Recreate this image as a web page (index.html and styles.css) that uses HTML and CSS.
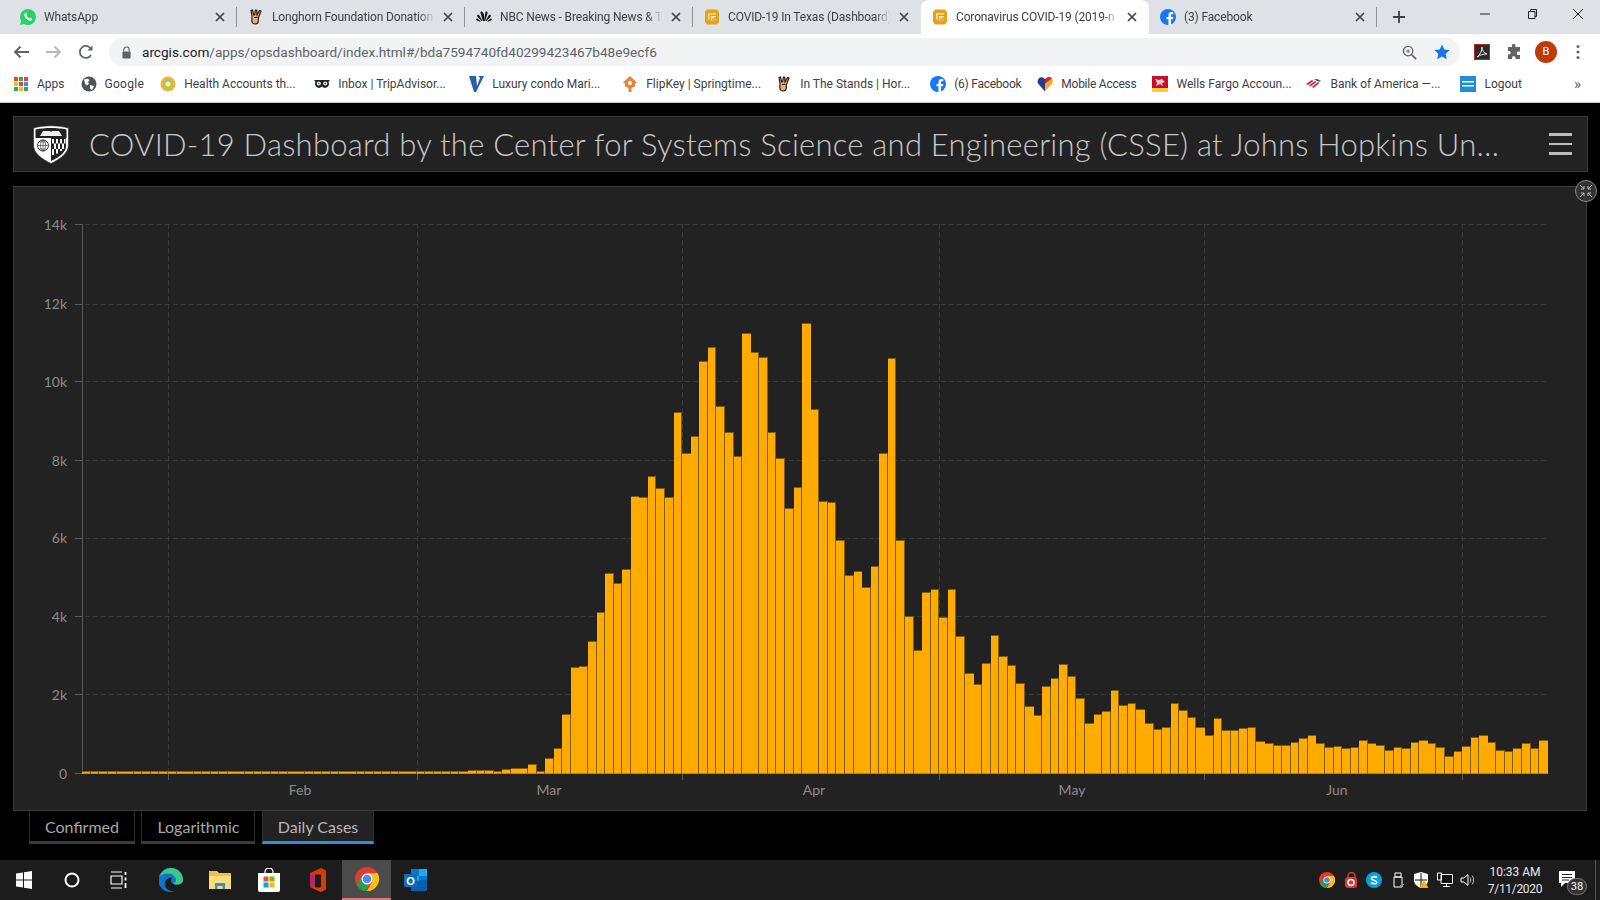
FILE: index.html
```html
<!DOCTYPE html>
<html lang="en">
<head>
<meta charset="utf-8">
<title>Coronavirus COVID-19</title>
<link rel="stylesheet" href="styles.css">
</head>
<body>
<svg class="defs" width="0" height="0" aria-hidden="true">
  <symbol id="i-x" viewBox="0 0 10 10"><path d="M1 1l8 8M9 1L1 9" stroke="#3f4347" stroke-width="1.700"/></symbol>
  <symbol id="i-wa" viewBox="0 0 16 16"><path d="M8 0a8 8 0 0 0-6.800 12.200L0 16l3.900-1.100A8 8 0 1 0 8 0z" fill="#25d366"/><path d="M5.600 3.900c.7-.3 1 .2 1.400 1.300.2.500 0 .8-.5 1.400.6 1.300 1.600 2.200 2.900 2.900.5-.6.800-.8 1.300-.5 1.100.5 1.600.8 1.300 1.500-.4 1-1.500 1.500-2.600 1.200C7.200 11.100 5 8.900 4.300 6.700c-.3-1.200.3-2.300 1.300-2.800z" fill="#fff"/></symbol>
  <symbol id="i-horn" viewBox="0 0 16 16"><path d="M3 1.500l1.500-.5 1.200 5 1-.4.600-4.600 1.500.2.200 4.800 2.500-4.500 1.500.5-2.500 6.500-.3 4c0 1.500-1 2.500-3 2.500s-3.200-1-3.400-3L4 7.500z" fill="#e3ae78" stroke="#1c1408" stroke-width="1.100"/><path d="M6 8.500h3.500" stroke="#1c1408"/></symbol>
  <symbol id="i-nbc" viewBox="0 0 16 16"><path d="M8 12V5.500L6.500 3C5.500 2 4 3 4.600 4.400L7 12zM8 12l1-6.500L9.500 3c1-1 2.500 0 2 1.400L9 12zM6.500 12L3 6C1.800 5 .6 6.300 1.300 7.500L5.500 12zM9.500 12L13 6c1.200-1 2.400.3 1.700 1.500L10.500 12zM5 12.500L1.300 9.500C0 9.300-.3 11 1 11.500l2 1zM11 12.500l3.700-3c1.300-.2 1.600 1.500.3 2l-2 1z" fill="#111"/></symbol>
  <symbol id="i-arc" viewBox="0 0 16 16"><path d="M3 .5h10l2 2.500v10l-2 2.500H3L1 13V3z" fill="#e5a21a"/><path d="M4 4h8v1.500H5.500v5H4zM7 7h5v5H7z" fill="#fbe3a8"/><path d="M8.500 9h1v3h-1zM10.500 8h1v4h-1z" fill="#c47f0c"/></symbol>
  <symbol id="i-fb" viewBox="0 0 16 16"><circle cx="8" cy="8" r="8" fill="#1877f2"/><path d="M11 16v-5.800h2l.3-2.300H11V6.400c0-.7.2-1.100 1.100-1.100h1.200V3.200c-.2 0-.9-.1-1.800-.1-1.800 0-3 1.100-3 3.100v1.700h-2v2.300h2V16z" fill="#fff"/></symbol>
  <symbol id="i-google" viewBox="0 0 16 16"><circle cx="8" cy="8" r="7.500" fill="#50555a"/><path d="M3 3.500L6.500 2.500l2 1.500-1.500 2L8 8 5.500 9.500 4 7.500zM9 9l4 1-2 4-2-1.500z" fill="#fff"/></symbol>
  <symbol id="i-health" viewBox="0 0 16 16"><circle cx="8" cy="8" r="7.500" fill="#f2b335"/><circle cx="8" cy="8" r="5" fill="#a9c84e"/><circle cx="8" cy="8" r="2.500" fill="#f3efc8"/></symbol>
  <symbol id="i-trip" viewBox="0 0 16 16"><path d="M0 4h16l-1.500 2a4 4 0 0 1-6.500 4.500A4 4 0 0 1 1.500 6z" fill="#222"/><circle cx="4.800" cy="7.500" r="2" fill="#fff"/><circle cx="11.200" cy="7.500" r="2" fill="#fff"/><circle cx="4.800" cy="7.500" r="1" fill="#2a8"/><circle cx="11.200" cy="7.500" r="1" fill="#c33"/></symbol>
  <symbol id="i-v" viewBox="0 0 16 16"><path d="M1 0h7l1 10 3-8-1.500-2H16L8 16H6z" fill="#2a5db0"/></symbol>
  <symbol id="i-flip" viewBox="0 0 16 16"><path d="M8 0l7 6.500-2 1v3L9.500 12v4h-3v-4L3 10.500v-3l-2-1z" fill="#e8853a"/><circle cx="8" cy="7" r="2" fill="#fff"/></symbol>
  <symbol id="i-sw" viewBox="0 0 16 16"><path d="M8 15.500L1 7.500C-.5 4 2.500 0 6 1.500L8 3z" fill="#2b3a8c"/><path d="M8 3l2-1.500c1.500-.7 3.500-.5 5 1L8 8z" fill="#e31837"/><path d="M15 2.500c1.500 2 1 4-.2 5.500L8 15.500V8z" fill="#f6b21b"/></symbol>
  <symbol id="i-wf" viewBox="0 0 16 16"><rect width="16" height="12" fill="#c8102e"/><rect y="12" width="16" height="4" fill="#ffcc33"/><path d="M3 3l4 1 3-1 3 3-3 1 1 3-3-2-4 2 1-3z" fill="#f4c6c6"/></symbol>
  <symbol id="i-boa" viewBox="0 0 16 16"><path d="M0 8l6-4 1.500 1L2 9zM3 9.500l6-4.500 1.500 1-6 4.500zM6 11l6-5 1.500 1-6 5z" fill="#d8213b"/><path d="M8 3.500L11 3l4 2-2 .8z" fill="#1f4f9c"/></symbol>
  <symbol id="i-amex" viewBox="0 0 16 16"><rect width="16" height="16" fill="#1f8ed6"/><path d="M2 5h12v1.500H2zM2 9h12v1.500H2z" fill="#fff"/></symbol>
</svg>

<div class="tabstrip">
  <div class="tab sep"><svg class="fav"><use href="#i-wa"/></svg><span class="tab-title">WhatsApp</span><svg class="tab-x"><use href="#i-x"/></svg></div>
  <div class="tab sep"><svg class="fav"><use href="#i-horn"/></svg><span class="tab-title">Longhorn Foundation Donation</span><svg class="tab-x"><use href="#i-x"/></svg></div>
  <div class="tab sep"><svg class="fav"><use href="#i-nbc"/></svg><span class="tab-title">NBC News - Breaking News &amp; T</span><svg class="tab-x"><use href="#i-x"/></svg></div>
  <div class="tab"><svg class="fav"><use href="#i-arc"/></svg><span class="tab-title">COVID-19 In Texas (Dashboard)</span><svg class="tab-x"><use href="#i-x"/></svg></div>
  <div class="tab active"><svg class="fav"><use href="#i-arc"/></svg><span class="tab-title">Coronavirus COVID-19 (2019-n</span><svg class="tab-x"><use href="#i-x"/></svg></div>
  <div class="tab sep"><svg class="fav"><use href="#i-fb"/></svg><span class="tab-title">(3) Facebook</span><svg class="tab-x"><use href="#i-x"/></svg></div>
  <svg class="newtab" viewBox="0 0 12 12"><path d="M6 0v12M0 6h12" stroke="#3c4043" stroke-width="1.800"/></svg>
  <div class="winctl">
    <svg viewBox="0 0 12 12"><path d="M1 6h10" stroke="#222"/></svg>
    <svg viewBox="0 0 12 12"><path d="M2.500 3.500h6.500v7H2.500zM4.500 3.500V1.500h6v7H9" fill="none" stroke="#222"/></svg>
    <svg viewBox="0 0 12 12"><path d="M1 1l10 10M11 1L1 11" stroke="#222"/></svg>
  </div>
</div>

<div class="toolbar">
  <svg class="tb-btn" viewBox="0 0 32 16"><path d="M24 8H10M15.500 2.500L10 8l5.500 5.500" fill="none" stroke="#5f6368" stroke-width="1.800"/></svg>
  <svg class="tb-btn" viewBox="0 0 32 16"><path d="M9 8h14M17.500 2.500L23 8l-5.500 5.500" fill="none" stroke="#b4b7bb" stroke-width="1.800"/></svg>
  <svg class="tb-btn" viewBox="-1 0 32 16"><path d="M21 11a6 6 0 1 1 .3-5.500" fill="none" stroke="#5f6368" stroke-width="1.800"/><path d="M22.500 1.500v5h-5z" fill="#5f6368"/></svg>
  <div class="omnibox">
    <svg class="lock" viewBox="0 0 12 14"><path d="M3 6V4a3 3 0 0 1 6 0v2" fill="none" stroke="#5f6368" stroke-width="1.300"/><rect x="1.500" y="6" width="9" height="7.500" rx="1" fill="#5f6368"/></svg>
    <span class="url"><span class="host">arcgis.com</span>/apps/opsdashboard/index.html#/bda7594740fd40299423467b48e9ecf6</span>
    <svg class="zoomglass" viewBox="0 0 16 16"><circle cx="6.500" cy="6.500" r="5" fill="none" stroke="#5f6368" stroke-width="1.400"/><path d="M10.500 10.500L15 15" stroke="#5f6368" stroke-width="1.800"/><path d="M4.500 6.500h4M6.500 4.500v4" stroke="#5f6368"/></svg>
    <svg class="star" viewBox="0 0 16 16"><path d="M8 .5l2.300 5 5.400.6-4 3.700 1.100 5.400L8 12.500l-4.800 2.700 1.100-5.400-4-3.700 5.400-.6z" fill="#1a73e8"/></svg>
  </div>
  <div class="tb-right">
    <span class="tb-slot"><svg class="ext" viewBox="0 0 16 16"><rect x=".5" y=".5" width="15" height="15" fill="#2b2b2b" stroke="#b3261e"/><path d="M3 13c3-2 5-6 5-10 0 4 2 6 5 7-4 0-7 1-10 3z" fill="none" stroke="#e8e8e8"/></svg></span>
    <span class="tb-slot"><svg class="ext" viewBox="0 0 16 16"><path d="M6 1.500a1.700 1.700 0 0 1 3.400 0V3H14v4.500h-1.500a1.800 1.800 0 0 0 0 3.600H14V15H9.500v-1.300a1.800 1.800 0 0 0-3.500 0V15H2v-4.500h1.300a1.800 1.800 0 0 0 0-3.500H2V3h4z" fill="#5f6368"/></svg></span>
    <span class="tb-slot"><span class="avatar">B</span></span>
    <span class="tb-slot"><svg class="ext" viewBox="0 0 16 16"><circle cx="8" cy="2.500" r="1.500" fill="#5f6368"/><circle cx="8" cy="8" r="1.500" fill="#5f6368"/><circle cx="8" cy="13.500" r="1.500" fill="#5f6368"/></svg></span>
  </div>
</div>

<div class="bookmarks">
  <a class="bm"><svg class="fav" viewBox="0 0 16 16"><path d="M1 1h4v4H1z" fill="#ea4335"/><path d="M6 1h4v4H6z" fill="#34a853"/><path d="M11 1h4v4h-4z" fill="#ea4335"/><path d="M1 6h4v4H1z" fill="#fbbc04"/><path d="M6 6h4v4H6z" fill="#ea4335"/><path d="M11 6h4v4h-4z" fill="#4285f4"/><path d="M1 11h4v4H1z" fill="#34a853"/><path d="M6 11h4v4H6z" fill="#fbbc04"/><path d="M11 11h4v4h-4z" fill="#34a853"/></svg><span>Apps</span></a>
  <a class="bm loose"><svg class="fav"><use href="#i-google"/></svg><span>Google</span></a>
  <a class="bm long"><svg class="fav"><use href="#i-health"/></svg><span>Health Accounts th...</span></a>
  <a class="bm long"><svg class="fav"><use href="#i-trip"/></svg><span>Inbox | TripAdvisor...</span></a>
  <a class="bm long"><svg class="fav"><use href="#i-v"/></svg><span>Luxury condo Mari...</span></a>
  <a class="bm long"><svg class="fav"><use href="#i-flip"/></svg><span>FlipKey | Springtime...</span></a>
  <a class="bm long"><svg class="fav"><use href="#i-horn"/></svg><span>In The Stands | Hor...</span></a>
  <a class="bm tight"><svg class="fav"><use href="#i-fb"/></svg><span>(6) Facebook</span></a>
  <a class="bm tight"><svg class="fav"><use href="#i-sw"/></svg><span>Mobile Access</span></a>
  <a class="bm long"><svg class="fav"><use href="#i-wf"/></svg><span>Wells Fargo Accoun...</span></a>
  <a class="bm long"><svg class="fav"><use href="#i-boa"/></svg><span>Bank of America —...</span></a>
  <a class="bm"><svg class="fav"><use href="#i-amex"/></svg><span>Logout</span></a>
  <span class="bm-more">»</span>
</div>

<main class="dash">
  <header class="dash-head">
    <svg class="logo" viewBox="0 0 38 40">
      <path d="M1.500 4C12 1 26 1 36.500 4V21c0 8-8 14-17.500 18.500C9.500 35 1.500 29 1.500 21z" fill="#fff" stroke="#222" stroke-width=".6"/>
      <path d="M3.500 5.500C13 3.500 25 3.500 34.500 5.500V14h-31z" fill="#222"/>
      <path d="M8 12l3-5h7l1 1 1-1h7l3 5z" fill="#eee"/>
      <path d="M5 14.500h13v21C11 33 5 28 5 21z" fill="#fff"/>
      <circle cx="11" cy="21.500" r="5.500" fill="none" stroke="#333"/>
      <path d="M5.500 21.500h11M11 16v11M7.500 18h7M7.500 25h7" stroke="#333" stroke-width=".6"/>
      <ellipse cx="11" cy="21.500" rx="2.500" ry="5.500" fill="none" stroke="#333" stroke-width=".6"/>
      <path d="M19 14h15v8c0 6-6 11-15 15z" fill="#222"/>
      <path d="M20 15h2v4.500h-2zM24 15h2v4.500h-2zM28 15h2v4.500h-2zM32 15h1.500v4.500H32zM22 19.500h2V25h-2zM26 19.500h2V25h-2zM30 19.500h2V25h-2zM20 25h2v6h-2zM24 25h2v4.500h-2zM28 25h2v2h-2z" fill="#fff"/>
    </svg>
    <h1 class="dash-title">COVID-19 Dashboard by the Center for Systems Science and Engineering (CSSE) at Johns Hopkins University (JHU)</h1>
    <div class="burger"><i></i><i></i><i></i></div>
  </header>

  <section class="card">
    <svg id="chart" class="chart" viewBox="14 187 1572 623">
      <g class="grid">
        <path d="M85 224.500H1547M85 304.500H1547M85 381.500H1547M85 460.500H1547M85 538.500H1547M85 616.500H1547M85 694.500H1547"/>
        <path d="M168.500 224V773M417.500 224V773M682.500 224V773M939.500 224V773M1204.500 224V773M1462.500 224V773"/>
      </g>
      <path class="axis" d="M82.500 224V774M75 224.500H83M75 304.500H83M75 381.500H83M75 460.500H83M75 538.500H83M75 616.500H83M75 694.500H83M75 773.500H83M168.500 773V780M417.500 773V780M682.500 773V780M939.500 773V780M1204.500 773V780M1462.500 773V780"/>
      <g id="bars"></g>
      <path class="baseline" d="M83 773.500H1547"/>
      <g class="ylabels">
        <text x="67" y="230">14k</text><text x="67" y="309">12k</text><text x="67" y="387">10k</text><text x="67" y="466">8k</text><text x="67" y="543">6k</text><text x="67" y="622">4k</text><text x="67" y="700">2k</text><text x="67" y="779">0</text>
      </g>
      <g class="xlabels">
        <text x="300" y="795">Feb</text><text x="549" y="795">Mar</text><text x="814" y="795">Apr</text><text x="1072" y="795">May</text><text x="1337" y="795">Jun</text>
      </g>
    </svg>
    <div class="expand">
      <svg viewBox="0 0 14 14"><path d="M1 1l4 4M5 2v3H2M13 1L9 5M9 2v3h3M1 13l4-4M5 12V9H2M13 13L9 9M9 12V9h3" fill="none" stroke="#bbb"/></svg>
    </div>
  </section>

  <nav class="subtabs">
    <span class="subtab">Confirmed</span>
    <span class="subtab">Logarithmic</span>
    <span class="subtab on">Daily Cases</span>
  </nav>
</main>

<footer class="taskbar">
  <span class="tk"><svg viewBox="0 0 24 24"><path d="M4 5.500l7-1v7H4zM12 4.300l8-1.200v8.400h-8zM4 12.500h7v7l-7-1zM12 12.500h8v8.400l-8-1.200z" fill="#fff"/></svg></span>
  <span class="tk"><svg viewBox="0 0 24 24"><circle cx="12" cy="12" r="6.500" fill="none" stroke="#fff" stroke-width="2"/></svg></span>
  <span class="tk"><svg viewBox="0 0 24 24"><path d="M3 4h11M3 20h11M3 8h11v8H3z" fill="none" stroke="#fff" stroke-width="1.200"/><path d="M17.500 4v3M17.500 9.500v3M17.500 15v5" stroke="#fff" stroke-width="1.800"/></svg></span>
  <span class="tk wide first"><svg viewBox="0 0 24 24"><path d="M12 0a12 12 0 0 1 12 12c0 3-3 4.500-6 4.500-4 0-6-1.500-6-4 0-2 1-3 1-3-5 0-8 4-7 8s6 7 11 5a12 12 0 1 1-5-22.500z" fill="#1374c6"/><path d="M1 8C3 3 7 0 12 0c7 0 12 5 12 12 0 3-3 4.500-6 4.500-1 0-3 0-4-1 1 0 3-1 3-3.500 0-3-3-6.500-8-6.500-4 0-7 2-8 2.500z" fill="#3bc984"/></svg></span>
  <span class="tk wide"><svg viewBox="0 0 24 24"><path d="M1 3h8l2 2h12v16H1z" fill="#f0c04a"/><path d="M1 8h22v13H1z" fill="#fbdd7c"/><path d="M7 15h10v6h-2.500v-3h-5v3H7z" fill="#2f8fd9"/></svg></span>
  <span class="tk wide"><svg viewBox="0 0 24 24"><path d="M8 5V4a4 4 0 0 1 8 0v1" fill="none" stroke="#fff" stroke-width="1.300"/><path d="M1 5h22v17a2 2 0 0 1-2 2H3a2 2 0 0 1-2-2z" fill="#fff"/><path d="M6.500 8.500h5v5h-5z" fill="#f25022"/><path d="M12.500 8.500h5v5h-5z" fill="#7fba00"/><path d="M6.500 14.500h5v5h-5z" fill="#00a4ef"/><path d="M12.500 14.500h5v5h-5z" fill="#ffb900"/></svg></span>
  <span class="tk wide"><svg viewBox="0 0 24 24"><path d="M4 5l11-5 5 2.500v19L15 24 4 19z" fill="#d83b01"/><path d="M15 4.500L8.500 6v12.500l6.500 1V24L4 19l7-.5V6.500L9 7" fill="#eb3c00"/><path d="M9 6.500h6v13H9z" fill="#1c1c1c"/><path d="M4 19V7l5-1v12z" fill="#b7246a"/></svg></span>
  <span class="tk wide running"><svg viewBox="0 0 24 24"><circle cx="12" cy="12" r="12" fill="#e33b2e"/><path d="M12 24a12 12 0 0 1-10.400-6L6.800 9 12 18z" fill="#2a9d4a"/><path d="M12 6h10.400A12 12 0 0 1 12 24l5.200-9z" fill="#fbc116"/><circle cx="12" cy="12" r="5.500" fill="#fff"/><circle cx="12" cy="12" r="4.300" fill="#4a8af4"/></svg></span>
  <span class="tk wide"><svg viewBox="0 0 24 24"><path d="M7 1h16v20H7z" fill="#28a8ea"/><path d="M7 1h8v7H7z" fill="#0078d4"/><path d="M15 8h8v7h-8z" fill="#0078d4"/><path d="M7 13l16-1v10a1 1 0 0 1-1 1H7z" fill="#0a5ea8"/><rect y="6" width="13" height="13" rx="1" fill="#0f6cbd"/><text class="tk-o" x="6.500" y="16.500">O</text></svg></span>

  <div class="tray">
    <svg viewBox="0 0 16 16"><circle cx="8" cy="8" r="8" fill="#e33b2e"/><path d="M8 16a8 8 0 0 1-7-4l3.500-6L8 12z" fill="#2a9d4a"/><path d="M8 4h7a8 8 0 0 1-7 12l3.500-6z" fill="#fbc116"/><circle cx="8" cy="8" r="3.500" fill="#fff"/><circle cx="8" cy="8" r="2.800" fill="#4a8af4"/></svg>
    <svg viewBox="0 0 16 16"><path d="M5 6V4a3.500 3.500 0 0 1 7 0v2" fill="none" stroke="#d23a33" stroke-width="1.500"/><rect x="2" y="5" width="12" height="11" rx="3" fill="#d23a33"/><circle cx="8" cy="10.500" r="3" fill="none" stroke="#fff" stroke-width="1.400"/></svg>
    <svg viewBox="0 0 16 16"><circle cx="8" cy="8" r="8" fill="#0a9be0"/><path d="M11 5.500C9 4 5 4.500 5.500 6.500S11 8.500 10.800 10.500 7 12 5 10.500" fill="none" stroke="#fff" stroke-width="1.600"/></svg>
    <svg viewBox="0 0 16 16"><path d="M5 1h6v4H5zM4 5h8v10H4z" fill="none" stroke="#fff"/><path d="M10 13l1.500 1.500L14 12" fill="none" stroke="#999"/></svg>
    <svg viewBox="0 0 16 16"><path d="M8 0l7 2v6c0 4-3 6.500-7 8-4-1.500-7-4-7-8V2z" fill="#fff"/><path d="M8 1v14M2 8h12" stroke="#111"/><path d="M11 8l4.500 8h-9z" fill="#f7b500"/></svg>
    <svg viewBox="0 0 16 16"><path d="M4 2.500h11.500v9H4zM.5 1h4v7h-4zM9.500 11.500v3M6 14.500h7" fill="#111" stroke="#fff"/></svg>
    <svg viewBox="0 0 16 16"><path d="M1 6h3l4-3.500v11L4 10H1z" fill="none" stroke="#fff"/><path d="M10 5.500a4 4 0 0 1 0 5M12 3.500a7 7 0 0 1 0 9" fill="none" stroke="#bbb"/></svg>
  </div>
  <div class="clock"><span>10:33 AM</span><span class="date">7/11/2020</span></div>
  <div class="notif">
    <svg viewBox="0 0 18 18"><path d="M1 1h16v12H7l-4 4v-4H1z" fill="#fff"/><path d="M4 4.500h10M4 7.500h10M4 10h7" stroke="#222"/></svg>
    <span class="badge">38</span>
  </div>
  <span class="tk-edge"></span>
</footer>

<script src="chart.js"></script>
</body>
</html>
```
FILE: styles.css
```css
* { box-sizing: border-box; }
html, body { margin: 0; padding: 0; }
body {
  width: 1600px;
  height: 900px;
  overflow: hidden;
  background: #000;
  display: flex;
  flex-direction: column;
  font-family: "Open Sans", "Liberation Sans", sans-serif;
}
.defs { position: absolute; }
.fav { width: 16px; height: 16px; flex: none; display: block; }

/* tab strip */
.tabstrip {
  height: 34px;
  background: #dee1e6;
  display: flex;
  align-items: stretch;
  padding-left: 9px;
  flex: none;
}
.tab {
  position: relative;
  width: 228px;
  flex: none;
  display: flex;
  align-items: center;
  padding: 0 12px 0 11px;
  font: 12px "Roboto", "Liberation Sans", sans-serif;
  color: #3c4043;
}
.tab.sep::after {
  content: "";
  position: absolute;
  right: 0;
  top: 7px;
  bottom: 7px;
  width: 1px;
  background: #8f9397;
}
.tab.active { background: #fff; border-radius: 8px 8px 0 0; color: #3c4043; }
.tab-title {
  flex: 1;
  margin-left: 8px;
  white-space: nowrap;
  overflow: hidden;
  letter-spacing: -.15px;
  -webkit-mask-image: linear-gradient(to right, #000 90%, transparent 100%);
  mask-image: linear-gradient(to right, #000 90%, transparent 100%);
}
.tab-x { width: 10px; height: 10px; margin-left: 8px; flex: none; }
.newtab { width: 12px; height: 12px; align-self: center; margin-left: 16px; flex: none; }
.winctl { margin-left: auto; display: flex; align-items: flex-start; gap: 34.500px; padding: 8px 16px 0 0; }
.winctl svg { width: 12px; height: 12px; }

/* toolbar */
.toolbar {
  height: 35px;
  background: #fff;
  display: flex;
  align-items: center;
  padding: 1px 0 0 5px;
  flex: none;
}
.tb-btn { width: 32px; height: 16px; flex: none; }
.omnibox {
  flex: 1;
  height: 28px;
  margin: 0 6px 0 8px;
  background: #f1f3f4;
  border-radius: 14px;
  display: flex;
  align-items: center;
  padding: 0 10px 0 12px;
}
.lock { width: 11px; height: 13px; flex: none; }
.url { margin-left: 10px; font: 13.600px "Roboto", "Liberation Sans", sans-serif; color: #5f6368; white-space: nowrap; flex: 1; }
.host { color: #202124; }
.zoomglass { width: 15px; height: 15px; margin-right: 17px; }
.star { width: 16px; height: 16px; }
.tb-right { display: flex; padding-right: 6px; }
.tb-slot { width: 32px; height: 28px; display: flex; align-items: center; justify-content: center; }
.ext { width: 16px; height: 16px; }
.avatar {
  width: 22px; height: 22px; border-radius: 50%;
  background: #c0390b; color: #fff;
  font: 11px/22px "Roboto", sans-serif;
  text-align: center;
}

/* bookmarks */
.bookmarks {
  height: 34px;
  background: #fff;
  border-bottom: 1px solid #c8c8c8;
  display: flex;
  align-items: center;
  padding: 0 0 4px 13px;
  flex: none;
  font: 12px "Roboto", "Liberation Sans", sans-serif;
  color: #3c4043;
}
.bm { display: flex; align-items: center; gap: 8px; margin-right: 16px; white-space: nowrap; flex: none; }
.bm.long { width: 154px; margin-right: 0; }
.bm.tight span { letter-spacing: -.25px; }
.bm.loose span { letter-spacing: .3px; }
.bm-more { margin-left: auto; margin-right: 19px; font-size: 15px; color: #5f6368; }

/* dashboard */
.dash { flex: 1; padding: 13px 12px 0 13px; display: flex; flex-direction: column; min-height: 0; }
.dash-head {
  height: 56px;
  background: #222;
  border: 1px solid #3a3a3a;
  display: flex;
  align-items: center;
  padding: 0 15px 0 18px;
  flex: none;
}
.logo { width: 38px; height: 40px; flex: none; }
.dash-title {
  margin: 0 0 0 19px;
  width: 1412px;
  flex: none;
  font: 300 31px "Lato", "Open Sans", sans-serif;
  letter-spacing: .24px;
  color: #c8c8c8;
  white-space: nowrap;
  overflow: hidden;
  text-overflow: ellipsis;
}
.burger { margin-left: auto; width: 23px; display: flex; flex-direction: column; gap: 7px; }
.burger i { display: block; height: 2.500px; background: #bdbdbd; }

.card {
  position: relative;
  height: 625px;
  margin: 14px 1px 0 0;
  background: #222;
  border: 1px solid #3a3a3a;
  flex: none;
}
.chart { display: block; width: 100%; height: 100%; }
.grid path { fill: none; stroke: #3a3a3a; stroke-dasharray: 5 3; }
.axis { fill: none; stroke: #5a5a5a; }
.baseline { stroke: rgba(130, 120, 100, .7); fill: none; }
.bar { fill: #ffab00; }
.bar-edge { fill: #7c5c14; }
.ylabels text { fill: #8c8c8c; font: 14px "Lato", sans-serif; text-anchor: end; }
.xlabels text { fill: #8c8c8c; font: 14px "Lato", sans-serif; text-anchor: middle; }
.expand {
  position: absolute;
  right: -11px;
  top: -7px;
  width: 22px;
  height: 22px;
  border-radius: 50%;
  background: #333;
  border: 1px solid #8a8a8a;
  display: flex;
  align-items: center;
  justify-content: center;
}
.expand svg { width: 14px; height: 14px; }

.subtabs { display: flex; gap: 6.500px; padding-left: 16px; }
.subtab {
  height: 33px;
  padding: 0 15px;
  font: 16px/31px "Lato", sans-serif;
  color: #a8a8a8;
  background: #000;
  border: 1px solid #2f2f2f;
  border-top: 0;
  border-bottom: 3px solid #3b3b3b;
}
.subtab.on { background: #222; color: #b8b8b8; border-bottom-color: #2a8fe5; }

/* taskbar */
.taskbar {
  height: 40px;
  background: #1c1c1c;
  display: flex;
  align-items: stretch;
  flex: none;
  position: relative;
}
.tk { width: 48px; display: flex; align-items: center; justify-content: center; flex: none; }
.tk svg { width: 24px; height: 24px; }
.tk.wide { width: 49px; }
.tk.first { margin-left: 2px; }
.tk.running { background: #4b4b4b; border-bottom: 2px solid #e0777c; }
.tk-o { font: 700 11px "Liberation Sans", sans-serif; fill: #fff; text-anchor: middle; }
.tray { margin-left: auto; display: flex; align-items: center; gap: 7.500px; }
.tray svg { width: 16px; height: 16px; }
.clock {
  width: 68px;
  margin-left: 5px;
  display: flex;
  flex-direction: column;
  align-items: center;
  justify-content: center;
  gap: 3px;
  font: 12px/14px "Roboto", sans-serif;
  color: #e8e8e8;
}
.date { letter-spacing: -.3px; }
.notif { position: relative; width: 46px; display: flex; align-items: center; justify-content: center; }
.notif svg { width: 18px; height: 18px; margin-bottom: 2px; margin-right: 10px; }
.badge {
  position: absolute;
  right: 8px;
  bottom: 5px;
  width: 20px;
  height: 17px;
  border-radius: 9px;
  background: #333;
  border: 1px solid #777;
  color: #fff;
  font: 11px/15px "Roboto", sans-serif;
  text-align: center;
}
.tk-edge { width: 1px; background: #555; margin-right: 4px; }
```
FILE: chart.js
```js
// Daily case bars, as pixel heights above the zero line, one per day from 22 Jan.
var heights = [
  1,1,1,1,1,1,1,1,1,1,1,1,1,1,1,1,1,1,1,1,1,1,1,1,1,1,1,1,1,1,
  1,1,1,1,1,1,1,1,1,1,1,1,1,1,1,
  2,2,2,1,3,4,4,8,1,14,24,58,105,106,131,160,
  199,189,203,276,275,296,284,275,360,319,336,411,425,366,340,316,439,420,415,340,314,264,285,449,
  363,271,270,232,197,201,185,206,319,414,232,156,122,180,183,155,183,136,99,88,109,137,116,107,89,
  66,57,86,94,108,96,74,49,58,61,82,67,69,63,49,43,45,69,62,55,45,
  37,54,42,42,44,45,31,29,27,27,30,34,37,29,25,26,24,25,32,29,27,22,25,24,30,32,29,25,16,21,26,35,37,30,22,21,24,29,24,32
];
var NS = "http://www.w3.org/2000/svg";
var group = document.getElementById("bars");
function rect(cls, x, y, w, h) {
  var r = document.createElementNS(NS, "rect");
  r.setAttribute("class", cls);
  r.setAttribute("x", x);
  r.setAttribute("y", y);
  r.setAttribute("width", w);
  r.setAttribute("height", h);
  group.appendChild(r);
}
function left(i) { return Math.round(82.3 + i * 8.57); }
// Roughly every seventh pair of neighbouring bars touches with no dark gap.
var touching = {};
for (var k = -9; k < 18; k++) { touching[Math.round(57 + 6.63 * k)] = true; }
heights.forEach(function (h, i) {
  var x = left(i);
  var period = left(i + 1) - x;
  rect("bar-edge", x, 773 - h - 1, period, h + 2);
  rect("bar", x, 773 - h, touching[i] ? period : period - 1, h + 1);
});
```
